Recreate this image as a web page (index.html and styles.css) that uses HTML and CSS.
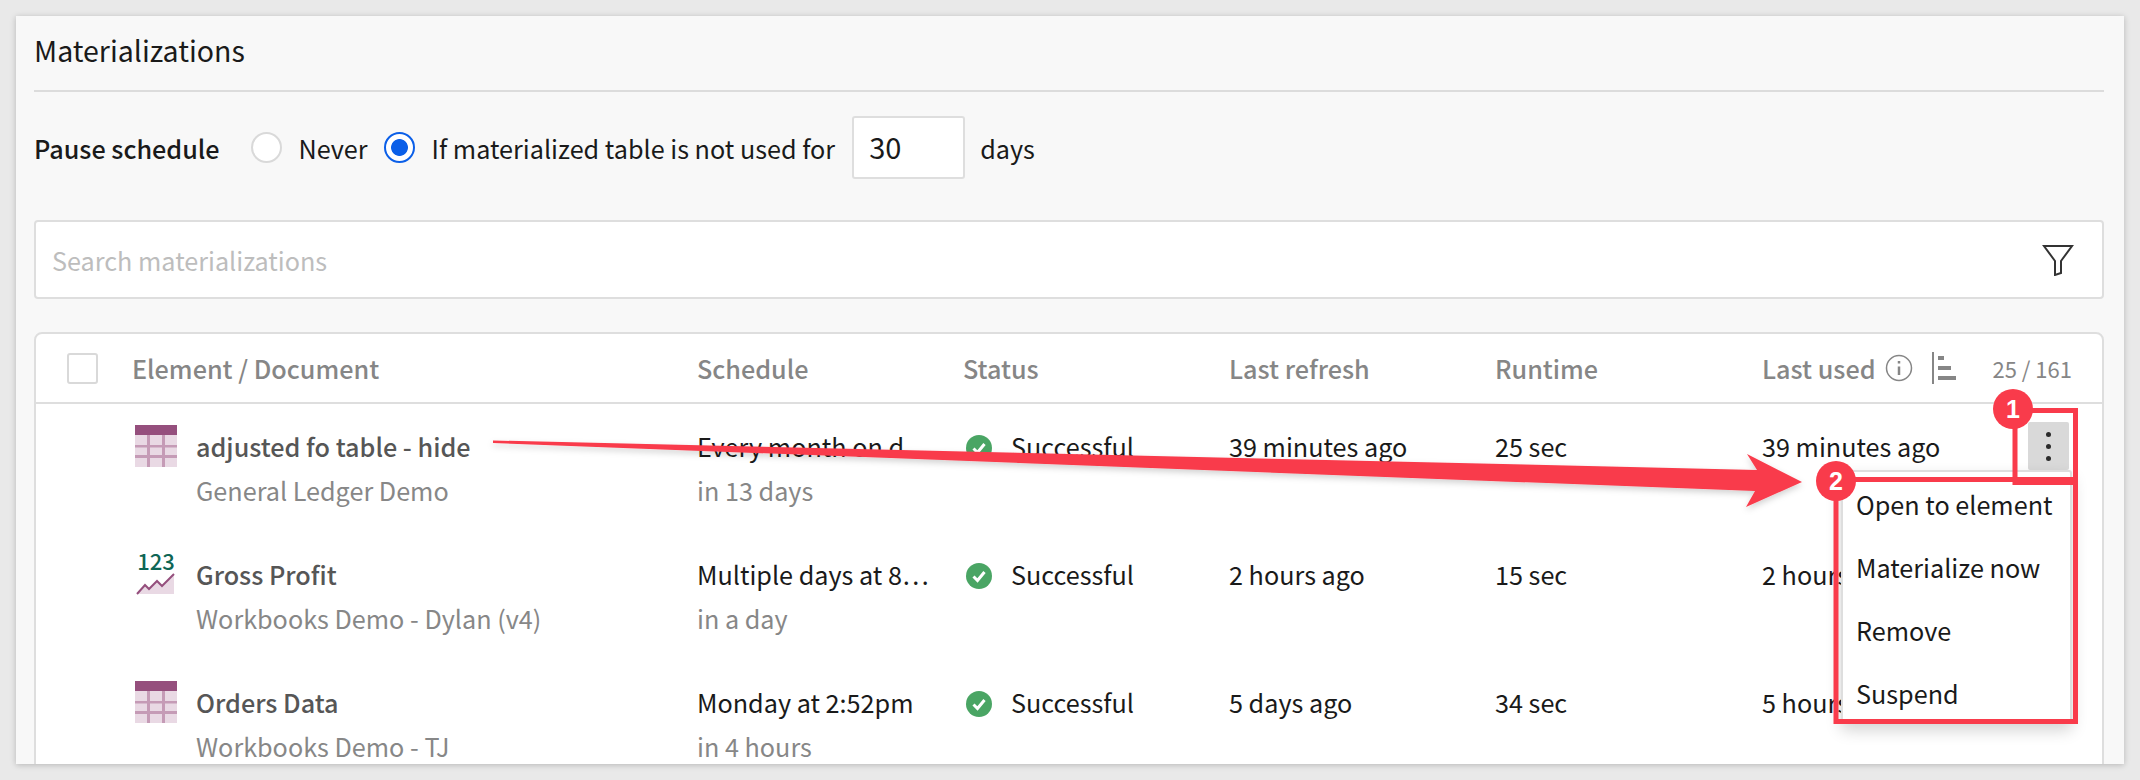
FILE: index.html
```html
<!DOCTYPE html>
<html lang="en">
<head>
<meta charset="utf-8">
<title>Materializations</title>
<link rel="stylesheet" href="styles.css">
</head>
<body>
<main class="panel">
  <h1 class="title">Materializations</h1>
  <div class="pause">
    <span class="pause-label">Pause schedule</span>
    <span class="radio"></span>
    <span class="radio-text">Never</span>
    <span class="radio radio-on"></span>
    <span class="radio-text">If materialized table is not used for</span>
    <span class="num-input">30</span>
    <span class="radio-text">days</span>
  </div>
  <div class="search">
    <span class="placeholder">Search materializations</span>
    <svg class="funnel" viewBox="0 0 32 32"><path d="M2 2H30L19 17V29L13 31V17Z"/></svg>
  </div>
  <section class="table">
    <div class="grid head">
      <span class="check-cell"><span class="check"></span></span>
      <span>Element / Document</span>
      <span>Schedule</span>
      <span>Status</span>
      <span>Last refresh</span>
      <span>Runtime</span>
      <span class="last-used">Last used
        <svg class="info" viewBox="0 0 28 28"><circle cx="14" cy="14" r="12.500"/><path d="M14 12.500V21M14 7V9.500"/></svg>
        <svg class="sort" viewBox="0 0 24 32"><path d="M0 0H2V32H0ZM6 4H12V8H6ZM6 14H19V18H6ZM6 24H24V28H6Z"/></svg>
        <span class="count">25 / 161</span>
      </span>
    </div>
    <div class="grid row">
      <span></span>
      <div class="el">
        <svg class="el-icon" viewBox="0 0 42 42"><use href="#table-icon"/></svg>
        <div><div class="name">adjusted fo table - hide</div><div class="sub">General Ledger Demo</div></div>
      </div>
      <div><div>Every month on d…</div><div class="sub">in 13 days</div></div>
      <div class="status"><svg class="ok" viewBox="0 0 26 26"><use href="#ok-icon"/></svg>Successful</div>
      <div>39 minutes ago</div>
      <div>25 sec</div>
      <div>39 minutes ago</div>
      <div class="kebab"><i></i><i></i><i></i></div>
    </div>
    <div class="grid row">
      <span></span>
      <div class="el">
        <svg class="el-icon" viewBox="0 0 42 42">
          <text x="21" y="17" class="metric-num">123</text>
          <path class="metric-fill" d="M2 41 10 32 14 36 22 28 27 33 39 21V41Z"/>
          <path class="metric-line" d="M2 41 10 32 14 36 22 28 27 33 39 21"/>
        </svg>
        <div><div class="name">Gross Profit</div><div class="sub">Workbooks Demo - Dylan (v4)</div></div>
      </div>
      <div><div>Multiple days at 8…</div><div class="sub">in a day</div></div>
      <div class="status"><svg class="ok" viewBox="0 0 26 26"><use href="#ok-icon"/></svg>Successful</div>
      <div>2 hours ago</div>
      <div>15 sec</div>
      <div>2 hours ago</div>
    </div>
    <div class="grid row">
      <span></span>
      <div class="el">
        <svg class="el-icon" viewBox="0 0 42 42"><use href="#table-icon"/></svg>
        <div><div class="name">Orders Data</div><div class="sub">Workbooks Demo - TJ</div></div>
      </div>
      <div><div>Monday at 2:52pm</div><div class="sub">in 4 hours</div></div>
      <div class="status"><svg class="ok" viewBox="0 0 26 26"><use href="#ok-icon"/></svg>Successful</div>
      <div>5 days ago</div>
      <div>34 sec</div>
      <div>5 hours ago</div>
    </div>
    <ul class="menu">
      <li>Open to element</li>
      <li>Materialize now</li>
      <li>Remove</li>
      <li>Suspend</li>
    </ul>
  </section>
</main>

<svg class="annotations" viewBox="0 0 2140 780">
  <defs>
    <g id="table-icon">
      <rect width="42" height="42" fill="#e9d9e4"/>
      <rect width="42" height="10" fill="#954f7d"/>
      <path fill="#c59bb6" d="M12 10h3v32h-3zM27 10h3v32h-3zM0 20h42v2.500H0zM0 30h42v3H0z"/>
    </g>
    <g id="ok-icon">
      <circle cx="13" cy="13" r="13" fill="#4aa564"/>
      <path d="M7.500 13.500 11.500 17.500 18.500 9" fill="none" stroke="#fff" stroke-width="3"/>
    </g>
    <filter id="soft" x="-5%" y="-50%" width="110%" height="200%">
      <feDropShadow dx="0" dy="3" stdDeviation="3" flood-color="#000" flood-opacity=".18"/>
    </filter>
  </defs>
  <polygon class="arrow" filter="url(#soft)" points="493,440.500 1757,470 1747,454 1802,482 1746,507 1755,491 493,443"/>
  <rect class="mark" x="2015" y="410.500" width="60.500" height="72"/>
  <rect class="mark" x="1836" y="479.500" width="239.500" height="242"/>
  <circle class="badge" cx="2013" cy="409" r="20"/>
  <text class="badge-num" x="2013" y="418">1</text>
  <circle class="badge" cx="1836" cy="481" r="20"/>
  <text class="badge-num" x="1836" y="490">2</text>
</svg>
</body>
</html>
```
FILE: styles.css
```css
* { box-sizing: border-box; }
html, body { margin: 0; height: 780px; overflow: hidden; }
body {
  background: #e9e9e9;
  padding: 16px;
  position: relative;
  font-family: "Noto Sans CJK SC", "Source Sans Pro", "Noto Sans", sans-serif;
  font-size: 25.200px;
  line-height: 44px;
  color: #1a1a1a;
}
.panel {
  width: 2108px;
  height: 748px;
  background: #f8f8f8;
  padding: 0 20px 0 18px;
  overflow: hidden;
  box-shadow: 0 1px 6px rgba(0,0,0,.22);
}
.title {
  margin: 0;
  height: 76px;
  padding-top: 12px;
  font-size: 28.500px;
  font-weight: 400;
  border-bottom: 2px solid #dcdcdc;
}
.pause {
  display: flex;
  align-items: center;
  margin-top: 24px;
  height: 63px;
  line-height: 42px;
}
.pause-label { font-weight: 500; margin-right: 31px; }
.radio {
  width: 31px;
  height: 31px;
  border-radius: 50%;
  border: 2px solid #d9d9d9;
  background: #fff;
  margin-right: 17px;
  flex: none;
}
.radio-on {
  border-color: #0b5fe8;
  background: radial-gradient(circle, #0b5fe8 0 8px, #fff 8.800px);
}
.radio-text { margin-right: 16px; }
.radio-text + .num-input { margin-left: 1px; }
.num-input {
  width: 113px;
  height: 63px;
  padding-left: 15px;
  font-size: 29px;
  line-height: 56px;
  background: #fff;
  border: 2px solid #dedede;
  border-radius: 3px;
  margin-right: 15px;
}
.search {
  display: flex;
  align-items: center;
  justify-content: space-between;
  height: 79px;
  margin-top: 41px;
  padding: 0 28px 0 16px;
  background: #fff;
  border: 2px solid #dedede;
  border-radius: 4px;
}
.placeholder { color: #bdbdbd; }
.funnel { width: 32px; height: 32px; }
.funnel path { fill: none; stroke: #333; stroke-width: 2; }
.table {
  position: relative;
  margin-top: 33px;
  height: 480px;
  background: #fff;
  border: 2px solid #dedede;
  border-radius: 8px;
}
.grid {
  display: grid;
  grid-template-columns: 96px 565px 266px 266px 266px 267px 266px 1fr;
}
.head {
  height: 70px;
  align-items: center;
  border-bottom: 2px solid #dedede;
  color: #868686;
  font-weight: 500;
}
.check-cell { padding-left: 31px; display: flex; }
.check {
  width: 31px;
  height: 31px;
  border: 2px solid #d9d9d9;
  border-radius: 3px;
}
.last-used { display: flex; align-items: center; grid-column: span 2; padding-right: 30px; }
.info { width: 28px; height: 28px; margin-left: 9px; }
.info circle, .info path { fill: none; stroke: #868686; stroke-width: 1.500; }
.info path { stroke-width: 2.500; }
.sort { width: 24px; height: 32px; margin-left: 19px; fill: #868686; }
.count { font-size: 22px; color: #868686; font-weight: 400; margin-left: auto; }
.row { height: 128px; padding-top: 20px; }
.el { display: flex; gap: 19px; padding-left: 3px; }
.el-icon { width: 42px; height: 42px; margin-top: 1px; flex: none; overflow: visible; }
.name { font-weight: 500; color: #565656; }
.sub { color: #878787; }
.status { display: flex; align-items: flex-start; }
.ok { width: 26px; height: 26px; margin: 11px 19px 0 3px; flex: none; }
.metric-num { font-size: 22px; font-weight: 500; fill: #0e6655; text-anchor: middle; }
.metric-fill { fill: #e9d9e4; }
.metric-line { fill: none; stroke: #954f7d; stroke-width: 2; }
.kebab {
  width: 41px;
  height: 48px;
  margin-top: -2px;
  background: #d9d9d9;
  border-radius: 2px;
  display: flex;
  flex-direction: column;
  align-items: center;
  justify-content: center;
  gap: 7px;
}
.kebab i { width: 5px; height: 5px; border-radius: 50%; background: #2b2b2b; }
.menu {
  position: absolute;
  top: 136px;
  right: 30px;
  width: 231px;
  height: 252px;
  margin: 0;
  padding: 7px 0 0 13px;
  list-style: none;
  background: #fff;
  border: 2px solid #dedede;
  border-radius: 3px;
  box-shadow: 0 8px 16px rgba(0,0,0,.18);
}
.menu li { height: 63px; line-height: 50px; }
.annotations { position: absolute; left: 0; top: 0; width: 2140px; height: 780px; pointer-events: none; }
.arrow { fill: #f93b4b; }
.mark { fill: none; stroke: #f93b4b; stroke-width: 5; }
.badge { fill: #f93b4b; }
.badge-num { fill: #fff; font-family: "Liberation Sans", Arial, sans-serif; font-size: 25px; font-weight: 700; text-anchor: middle; }
```
